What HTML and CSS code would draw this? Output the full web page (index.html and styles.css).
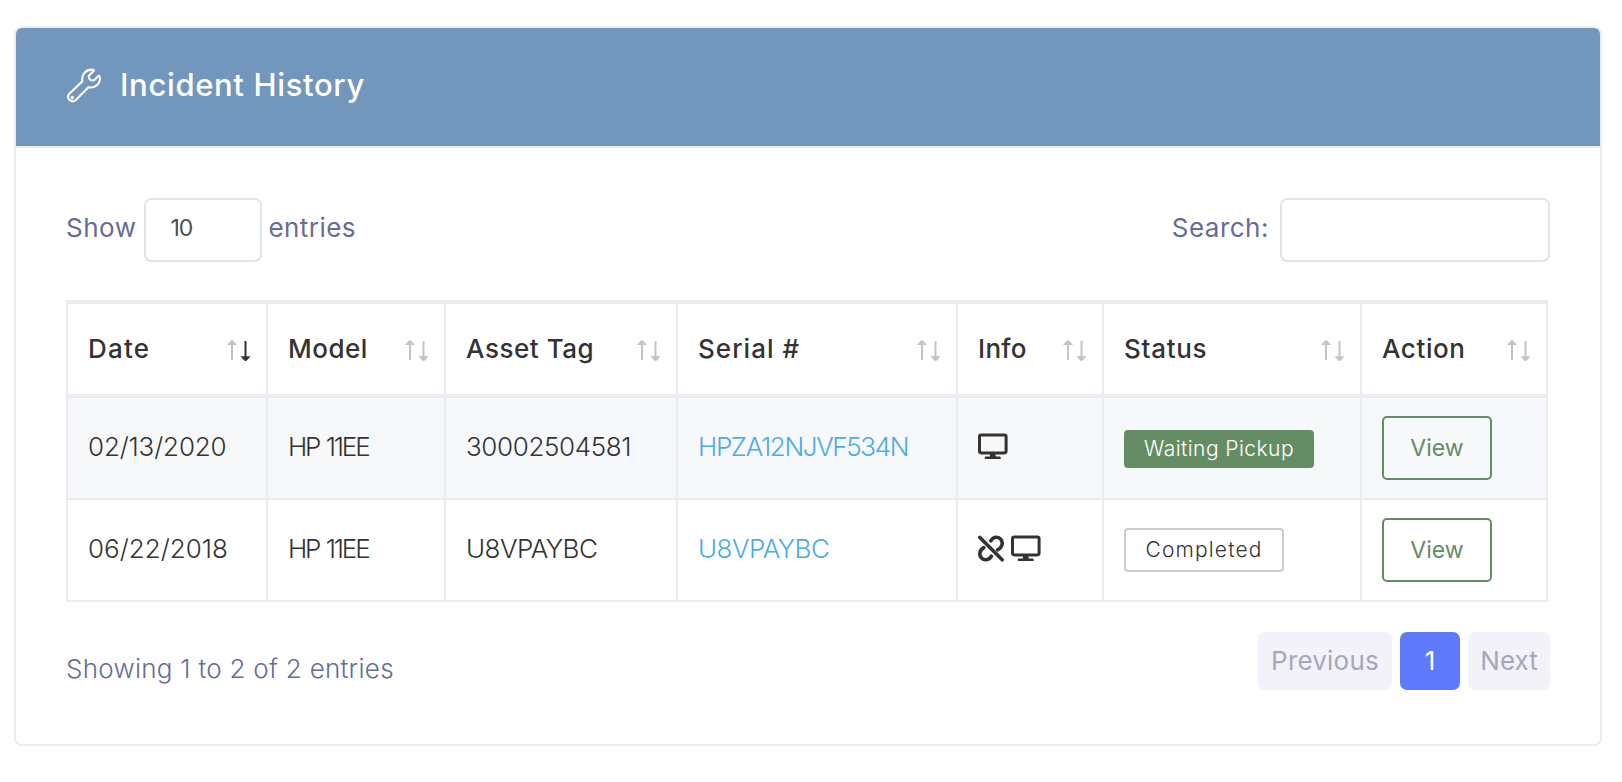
FILE: index.html
```html
<!DOCTYPE html>
<html lang="en">
<head>
<meta charset="utf-8">
<title>Incident History</title>
<link rel="stylesheet" href="styles.css">
</head>
<body>
<svg class="defs" aria-hidden="true">
  <symbol id="sort" viewBox="0 0 24 22">
    <path class="up" d="M4 20V5H0L3 1.6Q5 -.9 7 1.6L10 5H6V20Z"/>
    <path class="down" d="M17.5 1V16.2H13.5L16.5 19.8Q18.5 22.2 20.5 19.8L23.5 16.2H19.5V1Z"/>
  </symbol>
  <symbol id="monitor" viewBox="0 0 30 27">
    <rect x="1.5" y="1.9" width="26.6" height="18" rx="1.8" fill="none" stroke="currentColor" stroke-width="3"/>
    <path d="M12.2 20.5H17.2L17.8 23.6H21.8Q22.8 23.7 22.8 24.9T21.8 26.1H7.6Q6.6 26 6.6 24.9T7.6 23.6H11.7Z" fill="currentColor"/>
  </symbol>
  <symbol id="unlink" viewBox="0 0 26 27">
    <g fill="none" stroke="currentColor" stroke-width="3.6" stroke-linecap="round">
      <path d="M12.8 5.8C15.4 1.7 20.2 1.1 22.7 4.2C25.4 7.5 24.4 12.6 19.6 14.8"/>
      <path d="M5.8 12.6C1.2 15.4 .8 20 3.5 22.9C6.3 25.8 10.8 25.4 13.4 21.2"/>
      <path d="M1.9 2.4L24.2 24.8"/>
    </g>
  </symbol>
</svg>
<section class="card">
  <header class="card-header">
    <svg class="wrench" viewBox="0 0 36 36"><path d="M2.8 26.2L16.4 13.2C15 6.5 20.5.6 27.5 1.8L28 2.7L22.8 7.8C22.2 10.3 24.5 13.1 27.6 12.4C29.8 11.9 30.8 8 33.3 7.7C35.5 13.6 31.2 20.7 22.4 19.2L9.6 32.2A4.6 4.6 0 0 1 2.8 26.2Z"/><circle cx="6.2" cy="29.6" r=".8"/></svg>
    <h1><span class="t">Incident History</span></h1>
  </header>
  <div class="card-body">
    <div class="controls">
      <label class="length"><span class="t show">Show</span><span class="select">10</span><span class="t entries">entries</span></label>
      <label class="filter"><span class="t">Search:</span><input type="text" class="search"></label>
    </div>
    <table>
      <colgroup><col class="c1"><col class="c2"><col class="c3"><col class="c4"><col class="c5"><col class="c6"><col class="c7"></colgroup>
      <thead>
        <tr>
          <th class="h-date"><div class="head"><span class="t">Date</span><svg class="sort desc"><use href="#sort"/></svg></div></th>
          <th class="h-model"><div class="head"><span class="t">Model</span><svg class="sort"><use href="#sort"/></svg></div></th>
          <th class="h-tag"><div class="head"><span class="t">Asset Tag</span><svg class="sort"><use href="#sort"/></svg></div></th>
          <th class="h-serial"><div class="head"><span class="t">Serial #</span><svg class="sort"><use href="#sort"/></svg></div></th>
          <th class="h-info"><div class="head"><span class="t">Info</span><svg class="sort"><use href="#sort"/></svg></div></th>
          <th class="h-status"><div class="head"><span class="t">Status</span><svg class="sort"><use href="#sort"/></svg></div></th>
          <th class="h-action"><div class="head"><span class="t">Action</span><svg class="sort"><use href="#sort"/></svg></div></th>
        </tr>
      </thead>
      <tbody>
        <tr class="odd">
          <td><span class="t date">02/13/2020</span></td>
          <td><span class="t model">HP 11EE</span></td>
          <td><span class="t number">30002504581</span></td>
          <td><a class="t serial">HPZA12NJVF534N</a></td>
          <td><div class="icons"><svg class="monitor"><use href="#monitor"/></svg></div></td>
          <td><span class="badge waiting">Waiting Pickup</span></td>
          <td><a class="btn">View</a></td>
        </tr>
        <tr>
          <td><span class="t">06/22/2018</span></td>
          <td><span class="t model">HP 11EE</span></td>
          <td><span class="t code">U8VPAYBC</span></td>
          <td><a class="t code">U8VPAYBC</a></td>
          <td><div class="icons"><svg class="unlink"><use href="#unlink"/></svg><svg class="monitor"><use href="#monitor"/></svg></div></td>
          <td><span class="badge completed">Completed</span></td>
          <td><a class="btn">View</a></td>
        </tr>
      </tbody>
    </table>
    <footer class="foot">
      <div class="info">Showing 1 to 2 of 2 entries</div>
      <nav class="pages"><a class="page prev">Previous</a><a class="page active">1</a><a class="page next">Next</a></nav>
    </footer>
  </div>
</section>
</body>
</html>
```
FILE: styles.css
```css
* { box-sizing: border-box; }
body {
  margin: 0;
  padding: 26px 20px 36px 14px;
  background: #fff;
  color: #333;
  font: 300 26px/40px Inter, "Open Sans", sans-serif;
}
.defs { position: absolute; width: 0; height: 0; }
.t { display: inline-block; white-space: nowrap; }
.card {
  height: 720px;
  width: 1588px;
  border: 2px solid #ebecf2;
  border-radius: 8px;
  overflow: hidden;
}
.card-header {
  display: flex;
  align-items: center;
  height: 120px;
  padding: 0 50px;
  background: #7396bc;
  border-bottom: 2px solid #ebecf2;
  color: #fff;
}
.wrench { width: 36px; height: 36px; fill: none; stroke: #fff; stroke-width: 2; stroke-linejoin: round; margin-bottom: 3px; }
h1 { margin: 0 0 4px 18px; font-size: 31px; font-weight: 500; line-height: 44px; letter-spacing: .65px; }
.card-body { padding: 50px 50px 0 50px; }
.controls {
  display: flex;
  justify-content: space-between;
  height: 102px;
  color: #646c9a;
  font-weight: 400;
}
.length, .filter { display: flex; align-items: center; height: 64px; }
.length .t, .filter .t { padding-bottom: 4px; letter-spacing: .5px; }
.length .entries { letter-spacing: .45px; }
.select {
  width: 118px;
  height: 64px;
  margin: 0 6px 0 8px;
  padding: 8px 24px;
  border: 2px solid #e2e3eb;
  border-radius: 7px;
  color: #495057;
  font-size: 23px;
  letter-spacing: -1px;
}
.search { width: 270px; height: 64px; margin-left: 11px; border: 2px solid #e2e3eb; border-radius: 7px; background: #fff; }
table { width: 1482px; border-collapse: separate; border-spacing: 0; table-layout: fixed; }
.c1 { width: 202px; }
.c2 { width: 178px; }
.c3 { width: 232px; }
.c4 { width: 280px; }
.c5 { width: 146px; }
.c6 { width: 258px; }
.c7 { width: 186px; }
th, td { padding: 0 0 0 20px; border: 0 solid #ebecf2; border-right-width: 2px; text-align: left; vertical-align: middle; }
th:first-child, td:first-child { border-left-width: 2px; }
th { height: 98px; border-top-width: 4px; border-bottom-width: 4px; font-weight: 500; }
td { height: 102px; border-bottom-width: 2px; }
.odd td { background: #f7f8fa; }
td > .t { margin-bottom: 2px; vertical-align: top; }
td > a.t { color: #4aabe9; }
.h-date { letter-spacing: 1.2px; }
.h-model { letter-spacing: .5px; }
.h-tag { letter-spacing: .55px; }
.h-serial { letter-spacing: 1.05px; }
.h-info { letter-spacing: .3px; }
.h-status { letter-spacing: .7px; }
.h-action { letter-spacing: .6px; }
.date { letter-spacing: -.17px; }
.model { letter-spacing: -2.2px; word-spacing: 1.5px; }
.number { letter-spacing: -.38px; }
.serial { letter-spacing: -1.36px; }
.code { letter-spacing: -.55px; }
.head { display: flex; align-items: center; justify-content: space-between; padding-right: 15px; }
.sort { width: 24px; height: 22px; fill: #c4c4c4; margin-top: 4px; }
.sort.desc { --down: #333; }
.down { fill: var(--down, #c4c4c4); }
.icons { display: flex; gap: 7px; margin-top: -4px; }
.monitor { width: 30px; height: 27px; }
.unlink { width: 26px; height: 27px; }
.badge { display: flex; align-items: center; justify-content: center; border-radius: 4px; font-size: 21px; }
.waiting { width: 190px; height: 38px; margin-top: 2px; background: #658d64; color: #fff; letter-spacing: .45px; }
.completed { width: 160px; height: 44px; border: 2px solid #ccc; letter-spacing: 1.15px; }
.btn {
  display: flex;
  align-items: center;
  justify-content: center;
  width: 110px;
  height: 64px;
  border: 2px solid #658d64;
  border-radius: 5px;
  color: #658d64;
  font-size: 23px;
  font-weight: 400;
}
.foot { display: flex; justify-content: space-between; padding-top: 30px; color: #646c9a; }
.info { padding-top: 17px; letter-spacing: .27px; }
.pages { display: flex; gap: 8px; font-weight: 400; }
.page { display: flex; align-items: center; justify-content: center; height: 58px; border-radius: 7px; background: #f2f2f8; color: #a5a8bd; }
.prev { width: 134px; letter-spacing: .2px; }
.active { width: 60px; background: #6078fa; color: #fff; }
.next { width: 82px; }
```
